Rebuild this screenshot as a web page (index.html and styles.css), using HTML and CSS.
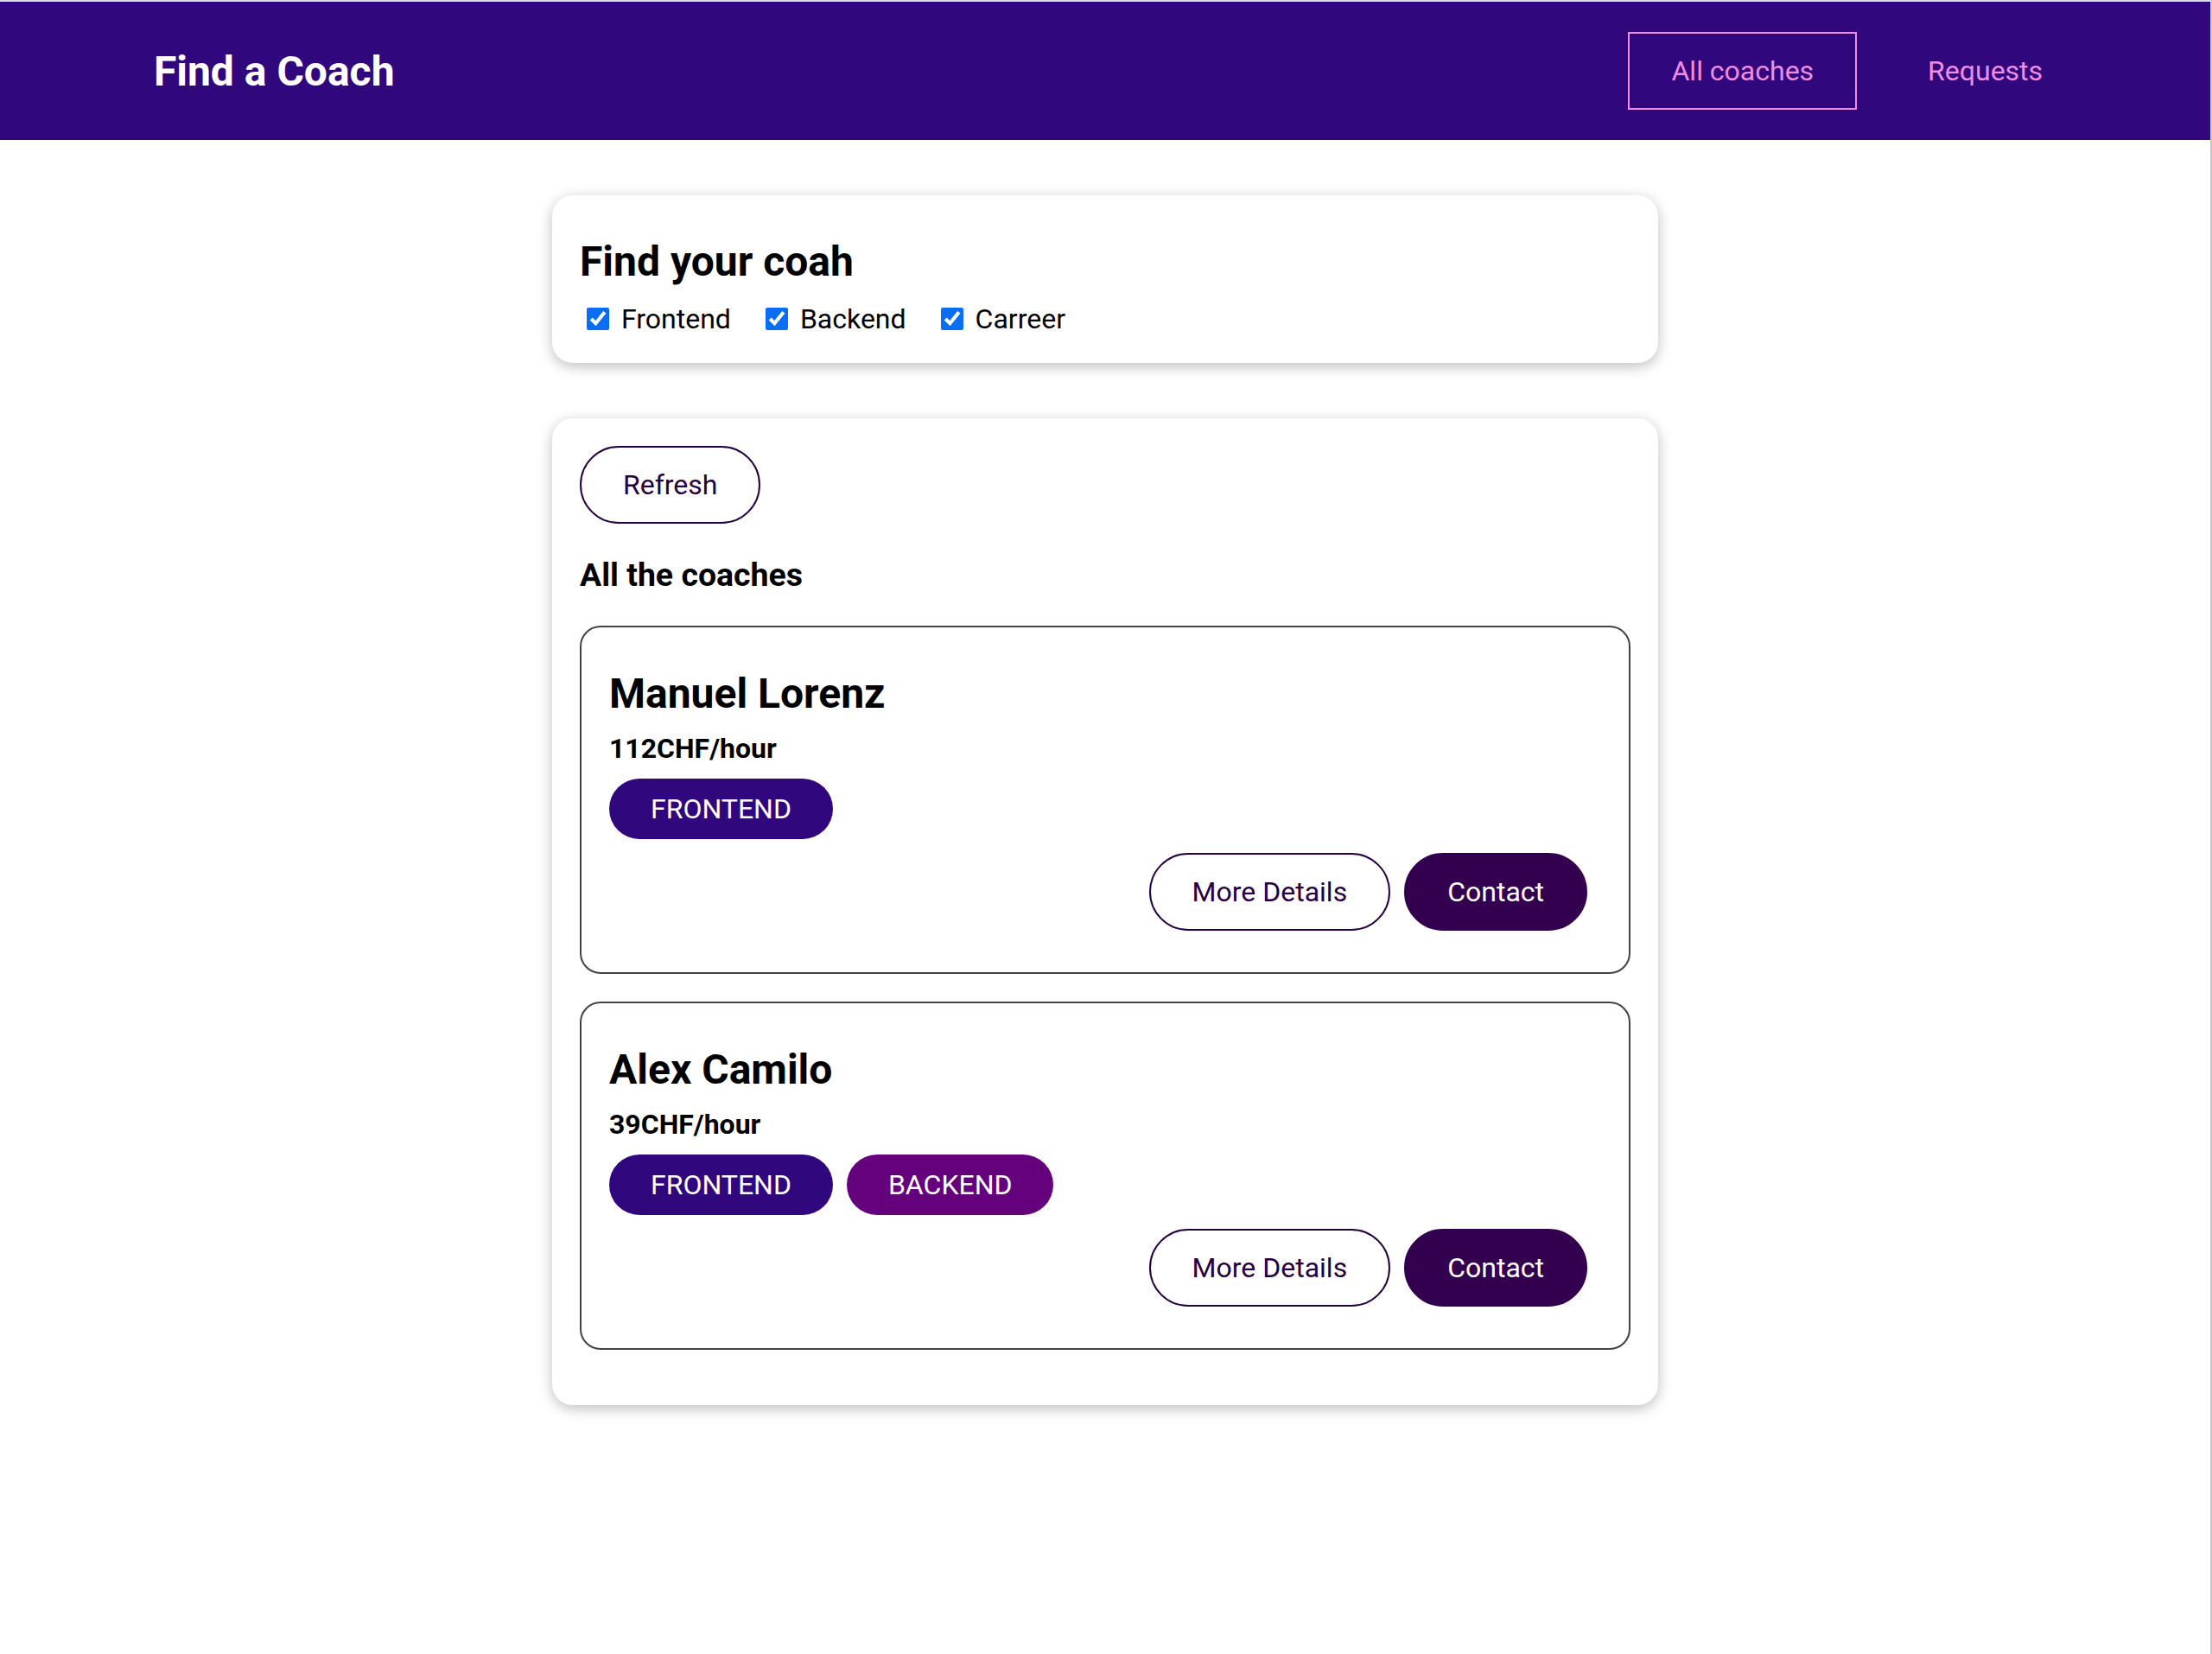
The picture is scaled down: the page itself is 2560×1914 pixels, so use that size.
FILE: index.html
```html
<!DOCTYPE html>
<html lang="en">
<head>
<meta charset="utf-8">
<title>Find a Coach</title>
<link rel="stylesheet" href="styles.css">
</head>
<body>
<div class="app">
  <header class="top">
    <nav class="nav">
      <h1 class="brand"><a href="#" class="brand-link">Find a Coach</a></h1>
      <ul class="nav-list">
        <li class="nav-item"><a href="#" class="nav-link active">All coaches</a></li>
        <li class="nav-item"><a href="#" class="nav-link">Requests</a></li>
      </ul>
    </nav>
  </header>
  <main>
    <section>
      <div class="card">
        <h2 class="filter-title">Find your coah</h2>
        <span class="filter-option"><input type="checkbox" id="frontend" checked><label for="frontend">Frontend</label></span><span class="filter-option"><input type="checkbox" id="backend" checked><label for="backend">Backend</label></span><span class="filter-option"><input type="checkbox" id="career" checked><label for="career">Carreer</label></span>
      </div>
    </section>
    <section>
      <div class="card">
        <div class="controls">
          <button class="btn outline">Refresh</button>
        </div>
        <h3 class="list-title">All the coaches</h3>
        <ul class="coach-list">
          <li class="coach">
            <h3 class="coach-name">Manuel Lorenz</h3>
            <h4 class="coach-rate">112CHF/hour</h4>
            <div class="badges"><span class="badge frontend">FRONTEND</span></div>
            <div class="actions">
              <a href="#" class="btn outline">More Details</a>
              <a href="#" class="btn">Contact</a>
            </div>
          </li>
          <li class="coach">
            <h3 class="coach-name">Alex Camilo</h3>
            <h4 class="coach-rate">39CHF/hour</h4>
            <div class="badges"><span class="badge frontend">FRONTEND</span><span class="badge backend">BACKEND</span></div>
            <div class="actions">
              <a href="#" class="btn outline">More Details</a>
              <a href="#" class="btn">Contact</a>
            </div>
          </li>
        </ul>
      </div>
    </section>
  </main>
</div>
</body>
</html>
```
FILE: styles.css
```css
* {
  box-sizing: border-box;
}

html {
  font-family: "Roboto", "Liberation Sans", sans-serif;
  font-size: 32px;
}

body {
  margin: 0;
  background: #ffffff;
}

.app {
  min-height: 1914px;
  border-top: 2px solid #dcdcdc;
  border-right: 2px solid #c3c6ca;
}

.top {
  width: 100%;
  height: 160px;
  background-color: #31077d;
  display: flex;
  justify-content: center;
  align-items: center;
}

.nav {
  width: 90%;
  margin: auto;
  display: flex;
  justify-content: space-between;
  align-items: center;
}

.brand {
  margin: 0;
  font-size: 48px;
  font-weight: 700;
}

.brand-link {
  color: #ffffff;
  text-decoration: none;
  display: inline-block;
  padding: 24px 48px;
  border: 2px solid transparent;
}

.nav-list {
  list-style: none;
  margin: 0;
  padding: 0;
  display: flex;
  align-items: center;
}

.nav-item {
  margin: 0 16px;
}

.nav-link {
  text-decoration: none;
  color: #f08de2;
  display: inline-block;
  padding: 24px 48px;
  border: 2px solid transparent;
  font-size: 32px;
}

.nav-link.active {
  border-color: #f08de2;
}

.card {
  border-radius: 24px;
  box-shadow: 0 4px 16px rgba(0, 0, 0, 0.26);
  padding: 32px;
  margin: 64px auto;
  max-width: 1280px;
}

.filter-title {
  margin: 16px 0;
  font-size: 48px;
  font-weight: 700;
}

.filter-option {
  margin-right: 32px;
}

.filter-option input {
  width: 26px;
  height: 26px;
  margin: 6px 6px 6px 8px;
  vertical-align: middle;
  accent-color: #0a6ef5;
}

.filter-option label {
  margin-left: 8px;
  vertical-align: middle;
}

.controls {
  display: flex;
  justify-content: space-between;
}

.list-title {
  font-size: 37.44px;
  margin: 37.44px 0;
}

.coach-list {
  list-style: none;
  margin: 0;
  padding: 0;
}

.coach {
  margin: 32px 0;
  border: 2px solid #424242;
  border-radius: 24px;
  padding: 32px;
}

.coach-name {
  font-size: 48px;
  margin: 16px 0;
}

.coach-rate {
  font-size: 32px;
  margin: 16px 0;
}

.badges {
  margin: 16px 0;
}

.badge {
  display: inline-block;
  padding: 16px 48px;
  border-radius: 60px;
  margin-right: 16px;
  background-color: #cccccc;
  color: #252525;
}

.badge.frontend {
  background-color: #31077d;
  color: #ffffff;
}

.badge.backend {
  background-color: #66017e;
  color: #ffffff;
}

.actions {
  margin: 16px 0;
  display: flex;
  justify-content: flex-end;
}

.btn {
  text-decoration: none;
  padding: 24px 48px;
  font: inherit;
  background-color: #33004f;
  border: 2px solid #33004f;
  color: #ffffff;
  cursor: pointer;
  border-radius: 60px;
  margin-right: 16px;
  display: inline-block;
}

.btn.outline {
  background-color: transparent;
  border-color: #270041;
  color: #270041;
}
```
